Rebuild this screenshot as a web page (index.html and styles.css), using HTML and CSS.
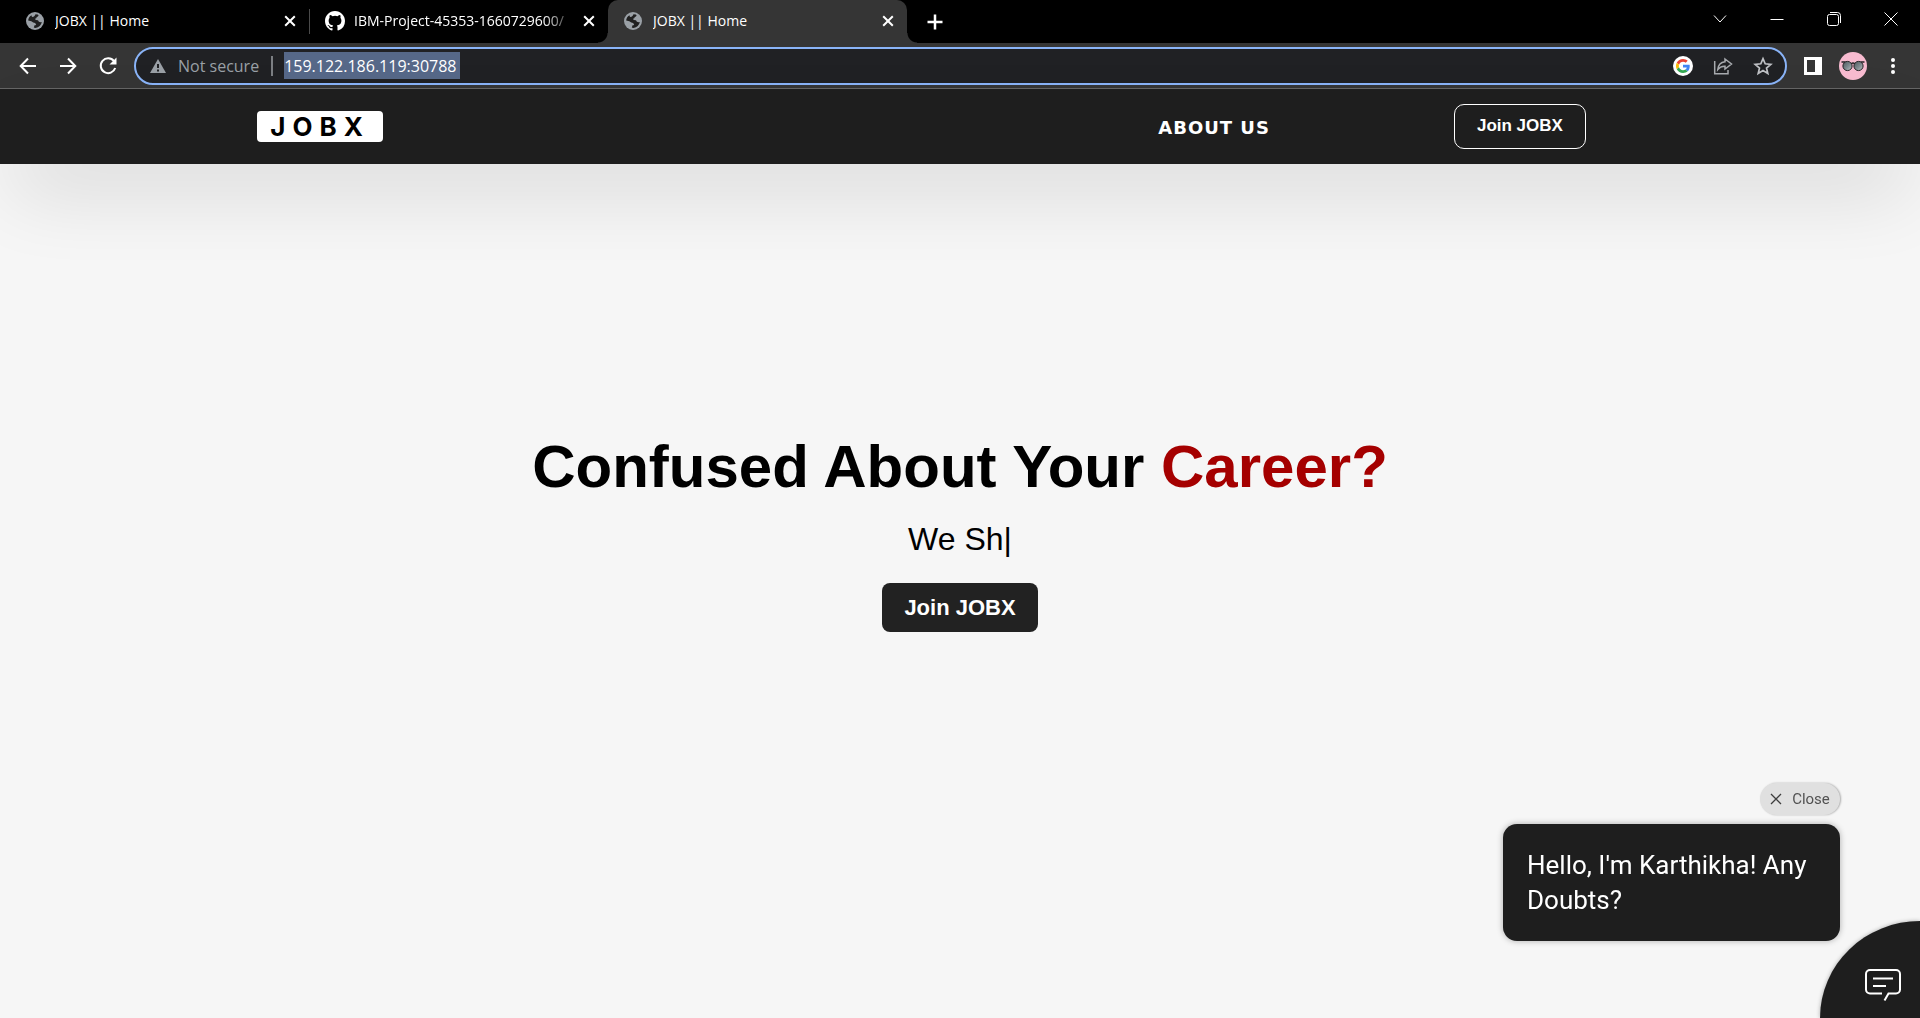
FILE: index.html
```html
<!DOCTYPE html>
<html lang="en">
<head>
<meta charset="utf-8">
<meta name="viewport" content="width=device-width, initial-scale=1">
<title>JOBX || Home</title>
<link rel="stylesheet" href="styles.css">
</head>
<body>
<svg class="defs" aria-hidden="true">
  <symbol id="globe" viewBox="0 0 18 18">
    <circle cx="9" cy="9" r="9" fill="#9aa0a6"/>
    <path class="land" d="M9.500 2.200Q12.500 2.300 12.600 3.200Q12.300 4.700 10.800 4.900L10.300 6.300Q9.300 6.200 9 7.300Q10 8.300 12 8.200Q12.500 10 14.600 10.300L15.800 10Q14.800 15.200 9.500 15.900Q8.200 15.900 7.700 15.600Q8.600 14.500 8 13.700Q9.700 13.500 10.200 12.500Q9.400 10.500 7.200 10.500Q6 9.200 2.200 8.600Q2.300 5 5.500 3.200Q5.600 5.200 7 5.100Q8.800 4.300 9.500 2.200Z"/>
  </symbol>
  <symbol id="cross" viewBox="0 0 12 12"><path d="M1.200 1.200L10.800 10.800M10.800 1.200L1.200 10.800" fill="none" stroke="currentColor" stroke-width="2"/></symbol>
</svg>

<div class="browser">
  <div class="tabstrip">
    <div class="tab">
      <svg class="favicon"><use href="#globe"/></svg>
      <span class="tab-title">JOBX || Home</span>
      <button class="tab-close" aria-label="Close tab"><svg width="12" height="12"><use href="#cross"/></svg></button>
    </div>
    <div class="tab tab-divided">
      <svg class="favicon favicon-large" viewBox="0 0 16 16"><path fill="#fff" d="M8 0C3.580 0 0 3.580 0 8c0 3.540 2.290 6.530 5.470 7.590.4.070.55-.17.55-.38 0-.19-.01-.82-.01-1.490-2.010.37-2.530-.49-2.690-.94-.09-.23-.48-.94-.82-1.130-.28-.15-.68-.52-.01-.53.63-.01 1.080.58 1.230.82.72 1.210 1.870.87 2.330.66.070-.52.28-.87.51-1.070-1.780-.2-3.640-.89-3.640-3.950 0-.87.31-1.590.82-2.150-.08-.2-.36-1.020.08-2.120 0 0 .67-.21 2.200.82a7.600 7.600 0 0 1 4 0c1.530-1.040 2.200-.82 2.200-.82.44 1.100.16 1.920.08 2.120.51.56.82 1.270.82 2.150 0 3.070-1.870 3.750-3.650 3.950.29.25.54.73.54 1.480 0 1.070-.01 1.930-.01 2.200 0 .21.15.46.55.38A8.010 8.010 0 0 0 16 8c0-4.420-3.580-8-8-8z"/></svg>
      <span class="tab-title tab-title-fade">IBM-Project-45353-1660729600/</span>
      <button class="tab-close" aria-label="Close tab"><svg width="12" height="12"><use href="#cross"/></svg></button>
    </div>
    <div class="tab tab-active">
      <svg class="favicon"><use href="#globe"/></svg>
      <span class="tab-title">JOBX || Home</span>
      <button class="tab-close" aria-label="Close tab"><svg width="12" height="12"><use href="#cross"/></svg></button>
    </div>
    <button class="new-tab" aria-label="New tab"><svg width="16" height="16"><path d="M8 .5v15M.5 8h15" stroke="#fff" stroke-width="2.500"/></svg></button>
    <div class="window-controls">
      <button aria-label="Search tabs"><svg width="14" height="14"><path d="M1 3.500l6 6.500 6-6.500" fill="none" stroke="#fff"/></svg></button>
      <button aria-label="Minimize"><svg width="14" height="14"><path d="M.5 7.500h13" stroke="#fff"/></svg></button>
      <button aria-label="Restore"><svg width="14" height="14" fill="none" stroke="#fff"><rect x=".5" y="2.500" width="11" height="11" rx="2"/><path d="M3 .5h7.500a3 3 0 0 1 3 3V11"/></svg></button>
      <button aria-label="Close window"><svg width="14" height="14"><path d="M.5.5l13 13M13.500.5l-13 13" stroke="#fff"/></svg></button>
    </div>
  </div>

  <div class="toolbar">
    <button class="tool" aria-label="Back"><svg width="20" height="20" fill="none" stroke="#fff" stroke-width="2"><path d="M18 10H3M10 2.500L2.700 10l7.300 7.500"/></svg></button>
    <button class="tool" aria-label="Forward"><svg width="20" height="20" fill="none" stroke="#fff" stroke-width="2"><path d="M2 10h15M10 2.500l7.300 7.500-7.300 7.500"/></svg></button>
    <button class="tool" aria-label="Reload"><svg width="20" height="20"><path d="M16 5.200A7.400 7.400 0 1 0 17.200 12" fill="none" stroke="#fff" stroke-width="2"/><path d="M18.500 1.500v7h-7z" fill="#fff"/></svg></button>
    <div class="omnibox">
      <svg width="16" height="14"><path d="M8 0l8 14H0z" fill="#9aa0a6"/><path d="M8 5v4M8 10.500v2" stroke="#202124" stroke-width="2"/></svg>
      <label class="security" for="address">Not secure</label>
      <input id="address" class="address" type="text" value="159.122.186.119:30788">
      <div class="omnibox-actions">
        <button aria-label="Search with Google"><svg width="20" height="20" viewBox="0 0 20 20"><circle cx="10" cy="10" r="10" fill="#fff"/><g transform="translate(3 3) scale(.292)"><path fill="#ea4335" d="M24 9.500c3.540 0 6.710 1.220 9.210 3.600l6.850-6.850C35.900 2.380 30.470 0 24 0 14.620 0 6.510 5.380 2.560 13.220l7.980 6.190C12.430 13.720 17.740 9.500 24 9.500z"/><path fill="#4285f4" d="M46.980 24.550c0-1.570-.15-3.090-.38-4.550H24v9.020h12.940c-.58 2.960-2.260 5.480-4.780 7.180l7.730 6c4.510-4.180 7.090-10.360 7.090-17.650z"/><path fill="#fbbc05" d="M10.530 28.590c-.48-1.450-.76-2.990-.76-4.590s.27-3.140.76-4.590l-7.980-6.190C.92 16.460 0 20.120 0 24c0 3.880.92 7.540 2.560 10.780z"/><path fill="#34a853" d="M24 48c6.480 0 11.930-2.130 15.890-5.810l-7.730-6c-2.150 1.450-4.920 2.300-8.160 2.300-6.260 0-11.570-4.220-13.470-9.910l-7.980 6.190C6.510 42.620 14.620 48 24 48z"/></g></svg></button>
        <button aria-label="Share"><svg width="20" height="18" fill="none" stroke="#a8abaf" stroke-width="1.500"><path d="M1.700 4v12.800H15V13"/><path d="M12 2l6.500 5-6.500 5V9.300Q7.500 9 4.800 12.500 5.500 5.500 12 4.800z"/></svg></button>
        <button aria-label="Bookmark this page"><svg width="20" height="20"><path d="M10 2.600l2.200 5.200 5.600.5-4.300 3.700 1.300 5.500-4.800-2.900-4.800 2.900 1.300-5.500-4.300-3.700 5.600-.5z" fill="none" stroke="#bfc1c5" stroke-width="1.700"/></svg></button>
      </div>
    </div>
    <button class="tool" aria-label="Side panel"><svg width="18" height="18"><path fill="#fff" d="M0 0h18v18H0zM3 3v12h8V3z" fill-rule="evenodd"/></svg></button>
    <button class="tool" aria-label="Profile"><svg width="28" height="28">
      <defs><linearGradient id="lens" x2="1" y2="1"><stop offset="0" stop-color="#4a5559"/><stop offset=".6" stop-color="#859095"/><stop offset="1" stop-color="#c4c4c6"/></linearGradient></defs>
      <circle cx="14" cy="14" r="14" fill="#f8bbd0"/><path d="M2.500 10h4M21.500 10h4M12 12q2-2 4 0" stroke="#252326" stroke-width="1.500" fill="none"/><circle cx="8.500" cy="14" r="4.600" fill="url(#lens)" stroke="#252326"/><circle cx="19.500" cy="14" r="4.600" fill="url(#lens)" stroke="#252326"/></svg></button>
    <button class="tool" aria-label="Menu"><svg width="4" height="16" fill="#fff"><circle cx="2" cy="2" r="2"/><circle cx="2" cy="8" r="2"/><circle cx="2" cy="14" r="2"/></svg></button>
  </div>
</div>

<header class="site-header">
  <a class="logo" href="#">JOBX</a>
  <nav class="site-nav">
    <a class="nav-link" href="#about">ABOUT US</a>
    <button class="join-outline">Join JOBX</button>
  </nav>
</header>

<main class="hero">
  <h1 class="headline">Confused About Your <span class="accent">Career?</span></h1>
  <p class="typed">We Sh|</p>
  <button class="join-solid">Join JOBX</button>
</main>

<aside class="chat-prompt">
  <button class="chat-close"><svg width="12" height="12" stroke="#3d3d3d" stroke-width="1.300"><path d="M1 1l10 10M11 1L1 11"/></svg>Close</button>
  <p class="chat-message">Hello, I'm Karthikha! Any Doubts?</p>
</aside>
<button class="chat-launcher" aria-label="Open chat"><svg width="36" height="33" fill="none" stroke="#fff" stroke-width="2"><path d="M17 24.500H5a4 4 0 0 1-4-4V5a4 4 0 0 1 4-4h26a4 4 0 0 1 4 4v15.500a4 4 0 0 1-4 4h-7.500l-4 7"/><path d="M8 9.500h20M8 17h13"/></svg></button>
</body>
</html>
```
FILE: styles.css
```css
* { box-sizing: border-box; }

body {
  margin: 0;
  min-height: 100vh;
  display: flex;
  flex-direction: column;
  background: #f6f6f6;
  color: #000;
  font-family: "Liberation Sans", Arial, sans-serif;
}

button {
  display: flex;
  align-items: center;
  justify-content: center;
  margin: 0;
  padding: 0;
  border: 0;
  background: none;
  color: inherit;
  font: inherit;
  cursor: pointer;
}

a { color: inherit; text-decoration: none; }
.defs { position: absolute; width: 0; height: 0; }

/* Browser frame */
.browser {
  color: #fff;
  font-family: "Open Sans", "Noto Sans", sans-serif;
}

.tabstrip {
  display: flex;
  height: 43px;
  padding-left: 10px;
  background: #000;
}

.tab {
  position: relative;
  display: flex;
  align-items: center;
  flex: 0 1 299px;
  min-width: 0;
  height: 43px;
  padding: 0 13px 2px 16px;
}

.tab-divided::before {
  content: "";
  position: absolute;
  left: 0;
  top: 9px;
  width: 1px;
  height: 25px;
  background: #4a4a4a;
}

.tab-active {
  background: #353535;
  border-radius: 10px 10px 0 0;
}

.tab-active::before,
.tab-active::after {
  content: "";
  position: absolute;
  bottom: 0;
  width: 10px;
  height: 10px;
}

.tab-active::before { right: 100%; background: radial-gradient(circle at 0 0, #000 9px, #353535 10px); }
.tab-active::after { left: 100%; background: radial-gradient(circle at 100% 0, #000 9px, #353535 10px); }

.favicon { flex: none; width: 18px; height: 18px; margin-right: 11px; }
.favicon-large { width: 20px; height: 20px; margin-right: 9px; }
.land { fill: #202020; }

.tab-title {
  flex: 1;
  overflow: hidden;
  white-space: nowrap;
  font-size: 14px;
  line-height: 20px;
}

.tab-title-fade { mask-image: linear-gradient(to left, transparent, #000 32px); }
.tab-close { margin-left: 8px; }
.new-tab { width: 36px; margin-left: 10px; }

.window-controls { display: flex; margin-left: auto; padding: 0 1px 6px 0; }
.window-controls button { width: 57px; }

.toolbar {
  display: flex;
  align-items: center;
  height: 46px;
  padding: 0 7px 0 8px;
  background: #353535;
  border-bottom: 1px solid #666;
}

.tool { flex: none; width: 40px; height: 36px; }

.omnibox {
  flex: 1;
  display: flex;
  align-items: center;
  height: 38px;
  margin: 0 6px;
  padding: 0 12px 0 14px;
  border: 2px solid #8ab4f8;
  border-radius: 19px;
  background: #202124;
  font-size: 16px;
}

.security {
  margin-left: 12px;
  padding-right: 12px;
  border-right: 2px solid #7c7f83;
  color: #9aa0a6;
  line-height: 20px;
}

.address {
  width: 176px;
  height: 27px;
  margin-left: 11px;
  padding: 0;
  border: 0;
  outline: 0;
  background: #566888;
  color: #fff;
  font: inherit;
}

.omnibox-actions { display: flex; margin-left: auto; }
.omnibox-actions button { width: 40px; }
.omnibox-actions button:last-child { width: 20px; margin-left: 10px; }

/* Site header */
.site-header {
  display: flex;
  align-items: center;
  justify-content: space-between;
  height: 75px;
  padding: 0 17.400% 0 13.400%;
  background: #1e1e1e;
  color: #fff;
  box-shadow: 0 36px 80px -12px rgba(0, 0, 0, .14);
}

.logo {
  padding: 0 13px;
  border-radius: 4px;
  background: #fff;
  color: #000;
  font: bold 26px/31px Inter, Verdana, sans-serif;
  letter-spacing: 7px;
}

.site-nav { display: flex; align-items: center; gap: 184px; }
.nav-link { padding-top: 2px; font: bold 18px/24px "DejaVu Sans", Verdana, sans-serif; letter-spacing: 1px; }

.join-outline {
  height: 45px;
  padding: 0 22px 2px;
  border: 1px solid #fff;
  border-radius: 10px;
  font-size: 17px;
  font-weight: bold;
}

/* Hero */
.hero {
  flex: 1;
  display: flex;
  flex-direction: column;
  align-items: center;
  justify-content: center;
  padding: 24px 16px 142px;
  text-align: center;
}

.headline { margin: 0; font-size: 60px; line-height: 70px; }
.accent { color: #a50000; }
.typed { margin: 18px 0 25px; font-size: 32px; line-height: 38px; }

.join-solid {
  height: 49px;
  padding: 0 22px;
  border-radius: 8px;
  background: #222;
  color: #fff;
  font-size: 22px;
  font-weight: bold;
}

/* Chat widget */
.chat-prompt {
  position: fixed;
  right: 80px;
  bottom: 77px;
  width: 337px;
  display: flex;
  flex-direction: column;
  align-items: flex-end;
  gap: 9px;
  font-family: Roboto, sans-serif;
}

.chat-close {
  gap: 10px;
  width: 80px;
  height: 32px;
  border-radius: 16px;
  background: #e0e0e0;
  box-shadow: 1px 0 2px rgba(0, 0, 0, .3);
  color: #525252;
  font-size: 15px;
}

.chat-message {
  margin: 0;
  width: 100%;
  padding: 24px 24px 23px;
  border-radius: 14px;
  background: #1e1e1e;
  box-shadow: 0 0 6px rgba(0, 0, 0, .3);
  color: #fff;
  font-size: 26px;
  line-height: 35px;
}

.chat-launcher {
  position: fixed;
  right: 0;
  bottom: 0;
  width: 100px;
  height: 97px;
  padding: 32px 0 0 26px;
  border-radius: 100% 0 0 0;
  background: #1e1e1e;
  box-shadow: 0 0 4px rgba(0, 0, 0, .3);
}
```
